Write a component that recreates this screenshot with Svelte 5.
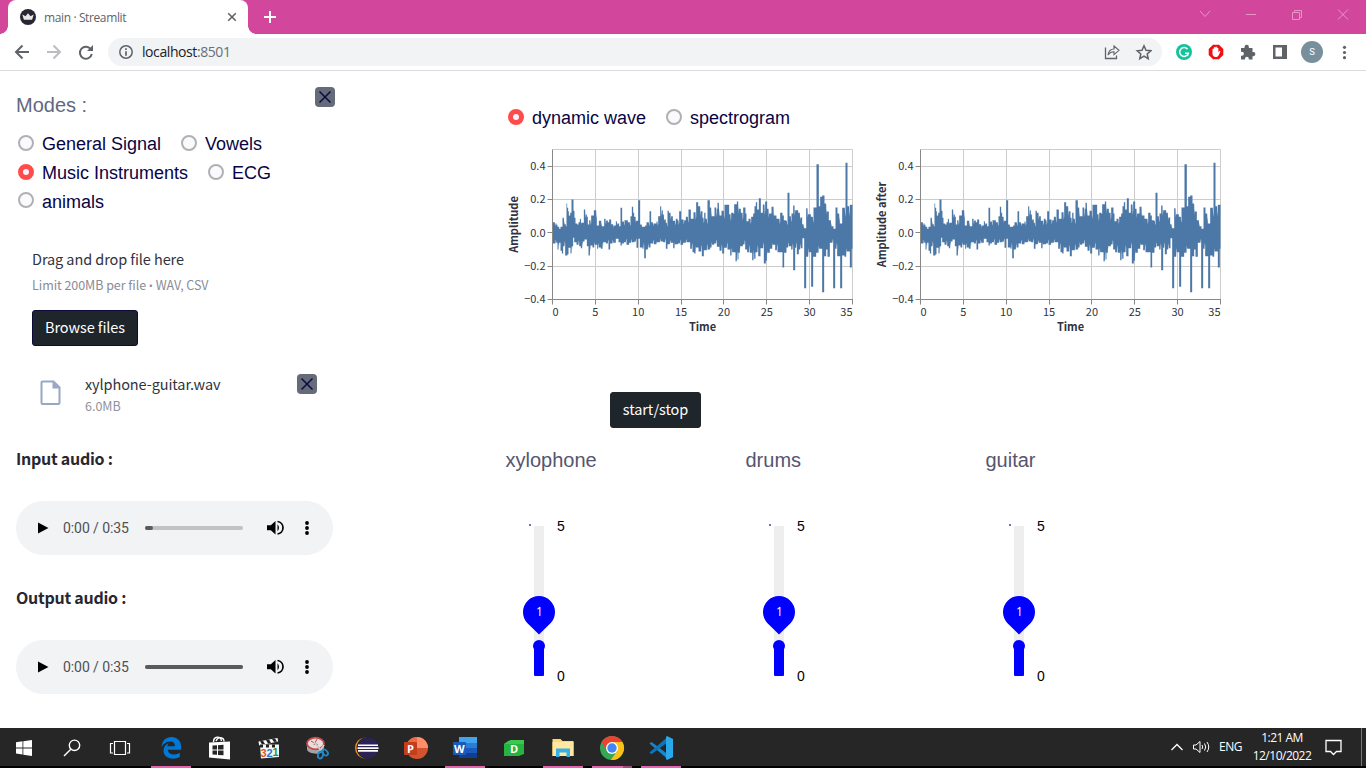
<script>
  // [x, height] steps of the signal envelope, 900 units across for 35 seconds
  const upper = [0,32,9,28,12,24,15,18,20,12,24,18,30,45,36,26,40,20,42,88,44,75,47,65,49,52,53,60,57,100,63,66,66,45,69,28,74,25,78,32,82,42,87,30,94,70,100,55,103,48,106,25,110,38,116,52,124,68,133,22,139,36,148,20,155,42,161,37,166,32,170,40,176,26,184,22,190,35,195,28,200,20,204,75,209,34,216,38,226,32,234,50,238,78,242,60,245,48,251,36,257,98,263,25,268,18,278,22,282,32,291,65,296,32,303,28,312,34,317,50,323,80,328,68,331,55,336,40,340,30,345,66,349,60,356,50,361,36,370,42,375,38,380,65,386,40,395,38,400,48,408,70,413,70,415,42,423,62,431,92,437,80,445,65,450,45,455,60,459,42,465,98,472,76,478,50,486,76,493,72,495,90,501,52,507,66,516,84,530,56,536,60,542,58,545,86,553,94,559,72,565,60,572,76,579,58,582,35,588,42,596,48,602,58,606,80,610,92,614,70,619,104,625,60,631,85,638,94,644,72,650,58,657,78,665,52,672,42,683,60,690,52,694,38,700,36,705,120,711,50,717,58,722,82,728,68,737,60,744,46,749,26,755,14,761,74,767,56,775,48,783,76,792,206,799,80,803,108,809,112,816,88,823,64,829,38,837,20,843,12,849,76,855,58,862,28,869,75,879,210,885,80,892,84,900,0];
  const lower = [0,32,11,30,15,50,20,30,24,54,28,62,32,40,38,68,45,64,48,45,54,62,59,40,62,15,65,28,72,36,80,40,85,46,91,26,96,20,103,40,108,68,114,38,120,44,127,36,134,48,139,44,145,48,152,28,160,32,168,50,173,32,182,30,190,18,198,28,204,38,208,32,214,28,222,36,230,30,238,28,246,26,252,45,257,18,262,44,270,48,275,76,280,50,288,44,294,32,304,34,312,28,324,26,332,28,340,48,345,34,354,30,362,46,368,34,376,32,384,36,392,30,402,28,413,48,420,58,425,62,431,44,438,56,448,70,454,52,465,50,473,44,479,36,485,32,493,42,501,54,509,62,515,45,525,50,533,68,539,58,549,85,555,80,558,60,564,40,571,35,578,50,584,58,592,60,599,82,605,78,609,58,617,70,624,46,634,92,640,84,645,60,652,48,661,36,668,52,675,58,690,104,695,60,702,44,709,40,716,50,722,112,728,45,733,64,739,50,745,46,750,16,755,166,761,72,769,58,776,162,782,72,791,60,800,48,809,178,815,70,821,50,825,72,832,30,842,166,848,48,854,70,863,166,869,68,876,72,883,56,892,104,898,48,900,0];
  function steps(a, sign) {
    let d = '';
    for (let i = 0; i < a.length; i += 2) {
      const x = a[i], h = a[i + 1], next = a[i + 2] ?? 900;
      d += `H${x}V${250 + sign * h}`;
      // narrow dips between neighbouring oscillations
      if (h > 24 && h < 95 && i % 4 === 0 && next - x > 4) d += `H${next - 2}L${next - 1} ${250 + sign * h * 0.62}L${next} ${250 + sign * h * 0.8}`;
    }
    return d;
  }
  const wave = 'M0 250' + steps(upper, -1) + 'V250H0' + steps(lower, 1) + 'V250Z';
  const charts = ['Amplitude', 'Amplitude after'];
  const xt = [0, 5, 10, 15, 20, 25, 30, 35];
  const yt = [['0.4', 0.4], ['0.2', 0.2], ['0.0', 0], ['−0.2', -0.2], ['−0.4', -0.4]];
  const rows = [['General Signal', 'Vowels'], ['Music Instruments', 'ECG'], ['animals']];
  const players = [['Input audio :', 8], ['Output audio :', 98]];
</script>

{#snippet radio(label, on)}
  <label class="radio"><i class:on></i><span>{label}</span></label>
{/snippet}

{#snippet closeBtn()}
  <button class="close" aria-label="close"><svg width="20" height="20"><path d="M4.5 4.5l11 11M15.500 4.500l-11 11" stroke="#0c0a42" stroke-width="1.5" /></svg></button>
{/snippet}

<div class="window">
  <header class="tabs">
    <div class="tab">
      <svg width="16" height="16" viewBox="0 0 16 16"><circle cx="8" cy="8" r="8" fill="#262730" /><path d="M2.300 5.500l3.200 1.800L8 4.200l2.500 3.100 3.200-1.800-1.600 5.300H3.900z" fill="#e8e8ea" /></svg>
      <span>main · Streamlit</span>
      <svg class="tx" width="10" height="10"><path d="M1.200 1.200l7.600 7.600M8.800 1.200L1.200 8.800" stroke="#5f6368" stroke-width="1.600" /></svg>
    </div>
    <svg class="plus" width="12" height="12"><path d="M6 0v12M0 6h12" stroke="#fff" stroke-width="2" /></svg>
    <svg class="winctl" width="152" height="14" fill="none" stroke="#e697c8"><path d="M2 4l5 5.500 5-5.500M48 7.500h10M94.500 5.500h7v7h-7zM96.500 5.500v-2h7v7h-2M140 2.500l10 10M150 2.500l-10 10" /></svg>
  </header>
  <div class="toolbar">
    <svg class="nav" width="80" height="18" fill="none" stroke="#5f6368" stroke-width="2"><path d="M15 9H2M8.500 2.500L2 9l6.500 6.500" /><path d="M33 9h13M39.500 2.500L46 9l-6.500 6.500" stroke="#bbbdc0" /><path d="M77 6.500A6 6 0 1 0 77.800 11" /><path d="M79 2v6h-6z" fill="#5f6368" stroke="none" /></svg>
    <div class="url">
      <svg width="14" height="14"><circle cx="7" cy="7" r="6.200" fill="none" stroke="#5f6368" stroke-width="1.500" /><path d="M7 3.300v1.600M7 6.200v4.500" stroke="#5f6368" stroke-width="1.700" /></svg>
      <span>localhost<em>:8501</em></span>
      <svg class="share" width="48" height="18" fill="none" stroke="#5f6368" stroke-width="1.300"><path d="M1.500 4.500v11h11v-3" /><path d="M4 12c.6-4 3-6 6-6V3l5 4.300-5 4.300V8.800c-3 0-4.500 1-6 3.200z" stroke-width="1.100" /><path d="M40 2.800l2 4.400 4.800.5-3.600 3.200 1 4.800-4.200-2.500-4.200 2.500 1-4.800-3.600-3.200 4.800-.5z" stroke-width="1.500" /></svg>
    </div>
    <svg class="ext" width="184" height="24" viewBox="1173 40 184 24">
      <circle cx="1184" cy="52" r="8" fill="#15c39a" /><path d="M1187.500 49.200a4.400 4.400 0 1 0 .8 4h-3.300M1188.500 53l-1.200 3" fill="none" stroke="#fff" stroke-width="1.500" />
      <path d="M1213 44.700h6l4.300 4.300v6l-4.300 4.300h-6l-4.300-4.300v-6z" fill="#f40d12" /><path d="M1212.500 53.500v-4.500q.8-.8 1.400 0v-1.500q.8-.8 1.500 0V47q.8-.8 1.500 0v1q.9-.6 1.500.2v4.200l1-1.500q.9-.2 1 .6l-2 4.200q-1 1.600-2.700 1.400-3.200-.2-3.200-3.600z" fill="#fff" />
      <path d="M1241 48h3.500v-1a2.200 2.200 0 0 1 4.400 0v1h3.600v4h.8a2 2 0 0 1 0 4.200h-.8v3.300h-3.700v-.8a1.900 1.900 0 0 0-3.800 0v.8h-4v-3.700h.9a2 2 0 0 0 0-4h-.9z" fill="#5f6368" />
      <path d="M1273 45h14v14h-14zM1275.500 47.500v9h6.500v-9z" fill="#5f6368" fill-rule="evenodd" />
      <circle cx="1312" cy="52" r="11" fill="#78909c" /><text x="1312" y="55" text-anchor="middle" fill="#fff" font-size="9.500" font-family="Roboto, sans-serif">S</text>
      <g fill="#5f6368"><circle cx="1344.500" cy="47.300" r="1.600" /><circle cx="1344.500" cy="52.500" r="1.600" /><circle cx="1344.500" cy="57.700" r="1.600" /></g>
    </svg>
  </div>

  <div class="page">
    <aside>
      <div class="modes"><span>Modes :</span>{@render closeBtn()}</div>
      <div class="options">
        {#each rows as row}
          <div class="row">{#each row as label}{@render radio(label, label === 'Music Instruments')}{/each}</div>
        {/each}
      </div>
      <div class="upload">
        <p class="drag">Drag and drop file here</p>
        <p class="limit">Limit 200MB per file <span>•</span> WAV, CSV</p>
        <button class="dark browse">Browse files</button>
      </div>
      <div class="file">
        <svg width="22" height="26" fill="none" stroke="#98a7c8" stroke-width="2"><path d="M2.500 1.500h11l6 6v15.500a1 1 0 0 1-1 1h-16a1 1 0 0 1-1-1v-20.500a1 1 0 0 1 1-1z" /><path d="M12.500 1.500l7 7h-7z" fill="#98a7c8" stroke="none" /></svg>
        <div><p class="fname">xylphone-guitar.wav</p><p class="fsize">6.0MB</p></div>
        {@render closeBtn()}
      </div>
      {#each players as [title, fill]}
        <h4>{title}</h4>
        <div class="player">
          <svg width="12" height="12"><path d="M1 .5l10.500 5.500L1 11.500z" /></svg>
          <span>0:00 / 0:35</span>
          <div class="bar"><b style="width:{fill}px"></b></div>
          <svg class="vol" width="17" height="16"><path d="M0 5.200h3.800L8.500 1v13.500L3.800 10.300H0z" /><path d="M10.500 4.300q3 3.500 0 7z" /><path d="M10.500 1.500a6.300 6.300 0 0 1 0 12.500" fill="none" stroke="#000" stroke-width="1.700" /></svg>
          <svg width="6" height="16"><circle cx="3" cy="3" r="1.900" /><circle cx="3" cy="8" r="1.900" /><circle cx="3" cy="13" r="1.900" /></svg>
        </div>
      {/each}
    </aside>
    <main>
      <div class="row view">{@render radio('dynamic wave', true)}{@render radio('spectrogram', false)}</div>
      <div class="charts">
        {#each charts as name}
          <svg width="368" height="200" class="chart">
            <g transform="translate(47.500 8.500)">
              <g stroke="#ccc">
                {#each xt as t}<path d="M{Math.round(t * 8.571)} 0v150" />{/each}
                <path d="M0 0h300" />
                {#each yt as [, v]}<path d="M0 {Math.round(83.3 - v * 166.700)}h300" />{/each}
              </g>
              <g transform="scale(.33333)"><path d={wave} fill="#4c78a8" /></g>
              <path d="M0 0v150.500M-.5 150h301" stroke="#888" />
              {#each xt as t}
                <path d="M{Math.round(t * 8.571)} 150v5" stroke="#888" />
                <text x={t === 0 ? 0 : t === 35 ? 300 : t * 8.571} y="166" text-anchor={t === 0 ? 'start' : t === 35 ? 'end' : 'middle'}>{t}</text>
              {/each}
              {#each yt as [s, v]}
                <path d="M-5 {Math.round(83.3 - v * 166.700)}h5" stroke="#888" />
                <text x="-7" y={87.3 - v * 166.700} text-anchor="end">{s}</text>
              {/each}
              <text class="b" x="150" y="181" text-anchor="middle">Time</text>
              <text class="b" transform="translate(-35 75) rotate(-90)" text-anchor="middle">{name}</text>
            </g>
          </svg>
        {/each}
      </div>
      <button class="dark start">start/stop</button>
      <div class="sliders">
        {#each ['xylophone', 'drums', 'guitar'] as name}
          <section>
            <h3>{name}</h3>
            <svg width="80" height="170">
              <rect x="24" y="8" width="2" height="2" fill="#6b70c8" />
              <rect x="29" y="10" width="10" height="150" rx="1" fill="#eee" />
              <rect x="29" y="130" width="10" height="30" rx="1" fill="#00f" />
              <circle cx="34" cy="130" r="6" fill="#00f" />
              <path d="M34 118.500L22.500 107.200a16 16 0 1 1 23 0z" fill="#00f" />
              <text class="val" x="34.500" y="100" text-anchor="middle">1</text>
              <text x="52" y="15" font-size="14">5</text>
              <text x="52" y="165" font-size="14">0</text>
            </svg>
          </section>
        {/each}
      </div>
    </main>
  </div>

  <footer>
    <svg width="700" height="40" viewBox="0 728 700 40">
      <path d="M0 766h700v2H0z" fill="#000" />
      <path d="M151 766h40v2h-40zM445 766h40v2h-40zM543 766h40v2h-40zM592 766h31v2h-31zM641 766h40v2h-40z" fill="#e464b0" /><path d="M623 766h9v2h-9z" fill="#a04a80" />
      <path d="M16 742.300l6.500-1v6.200H16zM23.300 741.200l8.700-1.200v7.500h-8.700zM16 748.400h6.500v6.200l-6.500-1zM23.300 748.400H32v7.600l-8.700-1.300z" fill="#fff" />
      <g fill="none" stroke="#fff" stroke-width="1.400"><circle cx="74.500" cy="745.300" r="5.200" /><path d="M70.800 749.200L64 756" /><path d="M114.500 741.500h11v13h-11zM113 743.500h-2.500v9.500h2.500M127 743.500h2.500v9.500H127" stroke-width="1.200" /></g>
      <path d="M161.500 747C162 740.500 166 737 171.500 737c6 0 9.600 4.300 9.600 9.700v3.100h-13.300c.3 5.200 7.200 6 12 3v4.300c-7.500 3.500-16.300.9-16.300-6.300 0-3.700 2-6.300 5.300-7.700-1 1.200-1.300 2-1.400 3.200h7.500c0-3.200-1.600-4.700-4.600-4.700-3.800 0-6.700 2-8.800 5.400z" fill="#0078d7" />
      <path d="M209 742.500l21-1v18l-21-2z" fill="#fff" /><path d="M213.500 742c0-6 7-6.500 8-1M216 741c2-5 8-4 8 .5" fill="none" stroke="#fff" stroke-width="1.400" /><path d="M212.500 745.500l4.500-.3v4.300h-4.500zM218 745.200l5.500-.4v4.700H218zM212.500 750.500h4.500v4.300l-4.500-.3zM218 750.500h5.500v4.800l-5.500-.4z" fill="#262626" />
      <path d="M258.500 741.500l19-3.500.7 3.500-19 4z" fill="#fff" /><path d="M260 741.300l3-.6 2 3.200-3 .6zM266 740.200l3-.6 2 3.200-3 .6zM272 739l3-.6 2 3-3 .6z" fill="#222" /><path d="M260 744.500h19v12.500l-18 1.500z" fill="#f5f5f5" /><path d="M260 744.500h3v3h-3zM266 744.500h3v3h-3zM272 744.500h3v3h-3z" fill="#222" />
      <g font-family="Liberation Sans, sans-serif" font-size="11" font-weight="700"><text x="260.500" y="757" fill="#e0561b">3</text><text x="266.500" y="757" fill="#2878c8">2</text><text x="272.500" y="756" fill="#249a38">1</text></g>
      <path d="M307 745v4c0 5 15 7 17 1v-5z" fill="#a5a5a5" /><ellipse cx="315.500" cy="743.500" rx="8.500" ry="5.800" fill="#e8dcdc" stroke="#c64848" stroke-width="1.800" /><path d="M311 741l7 4M317 739l-3 6" stroke="#c64848" /><path d="M314 742l9 11M324 745l-5 7" stroke="#ccc" stroke-width="1.800" /><g fill="none" stroke="#2189c8" stroke-width="1.800"><ellipse cx="320.500" cy="755" rx="2.500" ry="3.500" transform="rotate(20 320.500 755)" /><ellipse cx="325" cy="752.500" rx="3.500" ry="2.300" transform="rotate(45 325 752.500)" /></g>
      <circle cx="365.500" cy="748" r="10.500" fill="#f7941e" /><circle cx="367.500" cy="748" r="11" fill="#262626" /><circle cx="368" cy="748" r="10.500" fill="#2c2255" /><path d="M358 744.500h20v1.600h-20zM357.500 747.300h21v1.600h-21zM358 750.100h20v1.600h-20z" fill="#fff" />
      <circle cx="417" cy="748" r="11" fill="#d35230" /><path d="M417 737a11 11 0 0 1 11 11h-11z" fill="#ff8f6b" /><path d="M406 748a11 11 0 0 1 11-11v11z" fill="#ed6c47" /><rect x="404" y="742" width="13" height="13" rx="1" fill="#c43e1c" /><text x="407" y="752.500" class="tile">P</text>
      <path d="M459 737h18v6h-18z" fill="#41a5ee" /><path d="M459 743h18v5h-18z" fill="#2b7cd3" /><path d="M459 748h18v5h-18z" fill="#185abd" /><path d="M459 753h18v5h-18z" fill="#103f91" /><rect x="453" y="742" width="13" height="13" rx="1" fill="#185abd" /><text x="454" y="752.500" class="tile">W</text>
      <path d="M508 741l3-1h13v14l-5 2h-15v-12z" fill="#27b43e" /><path d="M504 744l7-4h13v4z" fill="#3cc74e" /><text x="510" y="752.500" class="tile">D</text>
      <path d="M552.500 739h8l2 2h11v15h-21z" fill="#ffd96b" /><path d="M552.500 742h21v14h-21z" fill="#ffe8a0" /><path d="M556 748.500h14v8.500h-3.500v-4.500h-7v4.500H556z" fill="#36b0e8" />
      <circle cx="612" cy="748" r="12" fill="#34a853" /><path d="M612 742h10.400a12 12 0 0 1-11.600 18L617.200 751z" fill="#fbc116" /><path d="M601.600 742A12 12 0 0 1 622.400 742H612L607 751z" fill="#ea4335" /><circle cx="612" cy="748" r="6" fill="#fff" /><circle cx="612" cy="748" r="4.700" fill="#4285f4" />
      <path d="M649.500 743.500l2-1.500 16 12v5z" fill="#1686ce" /><path d="M649.500 752.500l2 1.700 16-11.700v-5.500z" fill="#0877bb" /><path d="M667 736l6 3v18l-6 3-1-1v-22z" fill="#29a8ec" />
    </svg>
    <div class="tray">
      <svg width="42" height="16" fill="none" stroke="#fff" stroke-width="1.300"><path d="M1.500 11L7 5.500l5.500 5.500" /><path d="M23.500 6h2.500l4-3.500v11L26 10h-2.500zM32 6q1.500 2 0 4M34.500 4.500q2.500 3.500 0 7M37 3q3.500 5 0 10" stroke-width="1" /></svg>
      <span class="eng">ENG</span>
      <span class="clock"><i>1:21 AM</i><i>12/10/2022</i></span>
      <svg width="17" height="18" fill="none" stroke="#fff" stroke-width="1.300"><path d="M1 2.500h15v11h-4.500L8.500 16.500l-3-3H1z" /></svg>
      <b></b>
    </div>
  </footer>
</div>

<style>
  :global(body) { overflow: hidden; }
  * { box-sizing: border-box; }
  p, h3, h4 { margin: 0; white-space: nowrap; }
  svg { display: block; flex: none; }
  button { border: 0; padding: 0; flex: none; }
  .window { width: 1366px; height: 768px; display: flex; flex-direction: column; background: #fff; font-family: "Liberation Sans", sans-serif; overflow: hidden; }
  .tabs { height: 34px; background: #d2479c; display: flex; align-items: center; padding-left: 8px; }
  .tab { width: 240px; height: 34px; background: #fff; border-radius: 8px 8px 0 0; display: flex; align-items: center; padding-left: 12px; font: 12px "Open Sans", sans-serif; color: #5f6368; letter-spacing: -.38px; }
  .tab::before, .tab::after { content: ""; width: 8px; height: 8px; align-self: flex-end; flex: none; background: radial-gradient(circle at 0 0, transparent 7.500px, #fff 8px); }
  .tab::before { margin-left: -20px; margin-right: 12px; }
  .tab::after { background: radial-gradient(circle at 100% 0, transparent 7.500px, #fff 8px); margin-left: 11px; margin-right: -8px; }
  .tab span { margin-left: 8px; }
  .tx { margin-left: auto; }
  .plus { margin-left: 16px; }
  .winctl { margin-left: auto; margin-right: 16px; margin-top: -6px; }
  .toolbar { height: 37px; border-bottom: 1px solid #dadce0; display: flex; align-items: center; padding-left: 14px; }
  .url { width: 1054px; height: 28px; margin-left: 14px; border-radius: 14px; background: #f1f3f4; display: flex; align-items: center; padding: 0 10px 0 11px; font: 14px "Open Sans", sans-serif; color: #202124; letter-spacing: -.42px; }
  .url span { margin: -1px 0 0 9px; }
  .url em { font-style: normal; color: #6b6f74; }
  .share { margin-left: auto; }
  .ext { margin-left: 11px; }
  .page { height: 657px; display: flex; }
  aside { width: 505px; padding: 16px 0 0 16px; font-family: "Noto Sans CJK SC", sans-serif; }
  .modes { width: 319px; height: 36px; display: flex; justify-content: space-between; align-items: flex-start; font: 20px/36px "Liberation Sans", sans-serif; color: #626880; }
  .close { width: 20px; height: 20px; background: #666b7a; border-radius: 4px; }
  .options { padding: 7px 0 0 2px; height: 93px; }
  .row { display: flex; height: 28.700px; align-items: center; }
  .radio { display: flex; align-items: center; margin-right: 20px; font: 18px/28px "Liberation Sans", sans-serif; color: #080444; white-space: nowrap; }
  .radio i { width: 16px; height: 16px; border-radius: 50%; border: 2px solid #b1b1b5; background: #fafafc; margin: -3px 8px 0 0; }
  .radio i.on { border: 5px solid #ff4b4b; background: #f6f3fa; }
  .upload { padding: 31px 0 0 16px; }
  .drag { font-size: 14.500px; line-height: 24px; color: #31333f; letter-spacing: -.09px; }
  .limit { font-size: 12.500px; line-height: 20px; margin-top: 4px; color: #8a8c96; letter-spacing: -.05px; }
  .limit span { font: 11px "Open Sans", sans-serif; }
  .dark { display: block; height: 36px; background: #1e252b; border: 1px solid #0b0a38; border-radius: 3px; color: #fff; font: 14.500px/32px "Noto Sans CJK SC", sans-serif; letter-spacing: -.08px; padding-bottom: 2px; white-space: nowrap; }
  .browse { width: 106px; margin-top: 15px; }
  .file { display: flex; margin: 27px 0 0 24px; height: 44px; width: 277px; color: #31333f; }
  .file svg { margin-top: 7px; }
  .file .close { margin: 1px 0 0 auto; }
  .file .close svg { margin: 0; }
  .file div { margin-left: 23px; }
  .fname { font-size: 14.500px; line-height: 22px; letter-spacing: -.1px; }
  .fsize { font-size: 12.500px; line-height: 22px; color: #8f929c; }
  h4 { font-size: 16px; font-weight: 600; line-height: 24px; color: #262730; margin-top: 29px; letter-spacing: -.26px; }
  .player { width: 317px; height: 54px; margin-top: 31px; border-radius: 27px; background: #f1f3f4; display: flex; align-items: center; padding-left: 21px; }
  .player + h4 { margin-top: 30px; }
  .player span { font: 14px Roboto, sans-serif; width: 82px; margin-left: 14px; color: #505053; letter-spacing: -.08px; white-space: nowrap; }
  .bar { width: 98px; height: 4px; background: #c1c2c3; border-radius: 2px; }
  .bar b { display: block; height: 4px; background: #595a5b; border-radius: 2px; }
  .vol { margin: 0 20px 0 24px; }
  main { padding-top: 33px; }
  .view { padding-left: 3px; }
  .charts { display: flex; margin-top: 8.300px; }
  .chart text { font: 11px "Noto Sans CJK SC", sans-serif; fill: #31333f; }
  .chart .b { font-weight: 700; }
  .val { font: 12px "Open Sans", sans-serif; fill: #fff; }
  .start { width: 91px; margin: 51px 0 0 105px; border-color: #1e252b; }
  .sliders { display: flex; }
  .sliders section { width: 240px; }
  h3 { font-size: 20px; font-weight: 400; line-height: 24px; margin: 20px 0 44px; padding-left: .5px; color: #555570; }
  footer { height: 40px; background: #262626; display: flex; justify-content: space-between; border-bottom: 2px solid #000; }
  .tile { fill: #fff; font: 700 11px "Open Sans", sans-serif; }
  .tray { display: flex; align-items: center; color: #fff; font: 12px/18px "Open Sans", sans-serif; letter-spacing: -.5px; }
  .eng { margin-left: 7px; }
  .clock { width: 68px; margin: 0 9px 0 6px; text-align: center; }
  .clock i { display: block; font-style: normal; }
  .tray b { width: 1px; height: 38px; background: #777; margin: 0 4px 0 19px; }
</style>
